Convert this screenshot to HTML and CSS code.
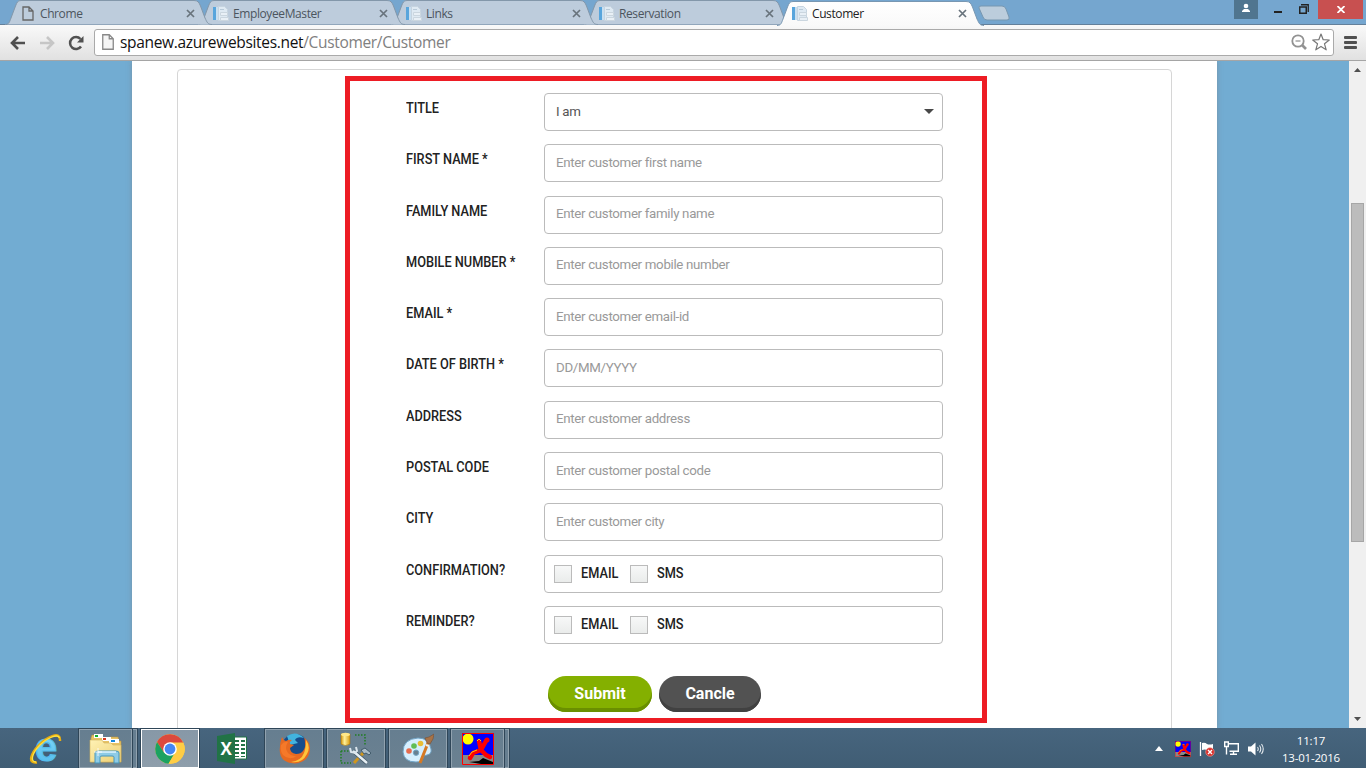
FILE: index.html
```html
<!DOCTYPE html>
<html lang="en">
<head>
<meta charset="utf-8">
<title>Customer</title>
<link rel="stylesheet" href="styles.css">
</head>
<body>
<svg class="defs" width="0" height="0" aria-hidden="true">
  <defs>
    <linearGradient id="active" x1="0" y1="0" x2="0" y2="1"><stop offset="0" stop-color="#fff"/><stop offset="1" stop-color="#f9f9f9"/></linearGradient>
    <linearGradient id="folder" x1="0" y1="0" x2="1" y2="1"><stop offset="0" stop-color="#fff2b5"/><stop offset="1" stop-color="#edcf72"/></linearGradient>
    <linearGradient id="gold" x1="0" x2="1"><stop offset="0" stop-color="#d59a14"/><stop offset=".4" stop-color="#fff09a"/><stop offset="1" stop-color="#d99a10"/></linearGradient>
    <linearGradient id="ieblue" x1="0" y1="0" x2="0" y2="1"><stop offset="0" stop-color="#8be0fb"/><stop offset="1" stop-color="#4fb9ec"/></linearGradient>
    <symbol id="tab-shape" viewBox="0 0 207 25"><path d="M0 24.500C4 24.500 4.500 22 6 18L10.500 6C12 2.500 12.500.500 16 .500H189C193 .500 194 2.500 195.500 6L200 18C202 22 202.500 24.500 207 24.500"/></symbol>
    <symbol id="favicon" viewBox="0 0 16 16"><path d="M0 1h3v13H0z" fill="#58a5dc"/><path d="M3 1h2v13H3z" fill="#c9dff0"/><path d="M5.500.500h6l3 3v11h-9z" fill="#dfeaf3" stroke="#c6d4e0"/><path d="M7.500 6.500h7v3h-7zM7.500 11.500h8v3h-8z" fill="#e9f0f6" stroke="#cbd6df"/><path d="M7 3.500h4" stroke="#b8cad9"/></symbol>
    <symbol id="close" viewBox="0 0 9 9"><path d="M1 1l7 7M8 1L1 8" fill="none" stroke="currentColor" stroke-width="1.700"/></symbol>
    <symbol id="page" viewBox="0 0 12 15"><path d="M1 1h6l4 4v9H1zM7 1v4h4" fill="none" stroke="currentColor" stroke-width="1.300"/></symbol>
    <symbol id="runner" viewBox="0 0 32 32"><path d="M0 0h32v32H0z" fill="#888"/><path d="M0 0h32v22H0z" fill="#00f"/><circle cx="6" cy="6" r="5.500" fill="#ff0"/><path d="M7 29l10-1 4-3 10 4v2H19z" fill="#000"/><path d="M24 8l-5 9-8 3-3 5M17 8l2 9 5 5 4 2" fill="none" stroke="#f00" stroke-width="4.500" stroke-linecap="round" stroke-linejoin="round"/><circle cx="25" cy="7" r="2.500" fill="#f00"/><path d="M15 8l2-2 2 2M7 23l3-4 5-2" fill="none" stroke="#ff0" stroke-width=".8"/><path d="M.5.5h31v31H.5z" fill="none" stroke="#f00"/></symbol>
  </defs>
</svg>
<div class="desktop">
  <header class="tabstrip">
    <div class="tabs">
      <div class="tab t1"><svg class="shape"><use href="#tab-shape"/></svg><svg class="ico file"><use href="#page"/></svg><span>Chrome</span><svg class="x"><use href="#close"/></svg></div>
      <div class="tab t2"><svg class="shape"><use href="#tab-shape"/></svg><svg class="ico"><use href="#favicon"/></svg><span>EmployeeMaster</span><svg class="x"><use href="#close"/></svg></div>
      <div class="tab t3"><svg class="shape"><use href="#tab-shape"/></svg><svg class="ico"><use href="#favicon"/></svg><span>Links</span><svg class="x"><use href="#close"/></svg></div>
      <div class="tab t4"><svg class="shape"><use href="#tab-shape"/></svg><svg class="ico"><use href="#favicon"/></svg><span>Reservation</span><svg class="x"><use href="#close"/></svg></div>
      <div class="tab on"><svg class="shape"><use href="#tab-shape"/></svg><svg class="ico"><use href="#favicon"/></svg><span>Customer</span><svg class="x"><use href="#close"/></svg></div>
      <svg class="newtab" width="32" height="16" viewBox="0 0 32 16"><path d="M3 1h21q3 0 4 3l3 8q1 3-2 3H9q-3 0-4-3L1 3q-.5-2 2-2z" fill="#bccddc" stroke="#7797b0"/></svg>
    </div>
    <div class="window-buttons">
      <div class="user"><svg width="24" height="19"><circle cx="12" cy="6" r="2.300" fill="#fff"/><path d="M8 12v-1l2-2h4l2 2v1z" fill="#fff"/></svg></div>
      <div class="min"></div>
      <svg class="restore" width="10" height="10"><path d="M2 .75h7.250V8" fill="none" stroke="#222" stroke-width="1.300"/><path d="M.75 3h6.500v6.250H.75z" fill="none" stroke="#222" stroke-width="1.500"/></svg>
      <div class="quit"><svg width="8" height="7"><path d="M.5 0l7 7M7.500 0l-7 7" stroke="#fff" stroke-width="1.800"/></svg></div>
    </div>
  </header>
  <nav class="toolbar">
    <svg class="arrow" width="16" height="14" viewBox="0 0 16 14"><path d="M15 7H3M8 1L2 7l6 6" fill="none" stroke="#505050" stroke-width="2.600"/></svg>
    <svg class="arrow fwd" width="16" height="14" viewBox="0 0 16 14"><path d="M1 7h12M8 1l6 6-6 6" fill="none" stroke="#c6c6c6" stroke-width="2.600"/></svg>
    <svg class="reload" width="16" height="16" viewBox="0 0 16 16"><path d="M13 11.500A6 6 0 1 1 12.500 4" fill="none" stroke="#505050" stroke-width="2.500"/><path d="M15.500 1v6.500H9z" fill="#505050"/></svg>
    <div class="address">
      <svg class="site" width="12" height="16" viewBox="0 0 12 16"><path d="M.75.750h6.500l4 4v10.500H.750zM7.250.750v4h4" fill="#f5f5f5" stroke="#888" stroke-width="1.300"/></svg>
      <p class="url">spanew.azurewebsites.net<span>/Customer/Customer</span></p>
      <svg class="lens" width="16" height="16" viewBox="0 0 16 16"><circle cx="7" cy="7" r="5.700" fill="none" stroke="#929292" stroke-width="1.800"/><path d="M4.500 7h5" stroke="#777"/><path d="M11 11l4 4" stroke="#929292" stroke-width="2.600"/></svg>
      <svg class="star" width="18" height="18" viewBox="0 0 18 18"><path d="M9 1l2.200 5.700 6.100.300-4.800 3.800 1.700 6L9 13.400l-5.200 3.400 1.700-6L.7 7l6.100-.300z" fill="#fff" stroke="#777" stroke-width="1.200" stroke-linejoin="round"/></svg>
    </div>
    <div class="menu"><i></i><i></i><i></i></div>
  </nav>
  <div class="viewport">
    <main class="site-body">
      <section class="panel">
        <form class="frame">
          <div class="row"><label>TITLE</label><div class="field select"><span>I am</span><svg width="10" height="5"><path d="M0 0h10L5 5z" fill="#484848"/></svg></div></div>
          <div class="row"><label>FIRST NAME *</label><div class="field hint">Enter customer first name</div></div>
          <div class="row"><label>FAMILY NAME</label><div class="field hint">Enter customer family name</div></div>
          <div class="row"><label>MOBILE NUMBER *</label><div class="field hint">Enter customer mobile number</div></div>
          <div class="row"><label>EMAIL *</label><div class="field hint">Enter customer email-id</div></div>
          <div class="row"><label>DATE OF BIRTH *</label><div class="field hint">DD/MM/YYYY</div></div>
          <div class="row"><label>ADDRESS</label><div class="field hint">Enter customer address</div></div>
          <div class="row"><label>POSTAL CODE</label><div class="field hint">Enter customer postal code</div></div>
          <div class="row"><label>CITY</label><div class="field hint">Enter customer city</div></div>
          <div class="row"><label>CONFIRMATION?</label><div class="field checks"><i></i><b class="mail">EMAIL</b><i></i><b>SMS</b></div></div>
          <div class="row"><label>REMINDER?</label><div class="field checks"><i></i><b class="mail">EMAIL</b><i></i><b>SMS</b></div></div>
          <div class="actions"><button type="button" class="submit">Submit</button><button type="button" class="cancel">Cancle</button></div>
        </form>
      </section>
    </main>
    <aside class="scrollbar">
      <svg width="7" height="4"><path d="M0 4h7L3.500 0z" fill="#505050"/></svg>
      <div class="thumb"></div>
      <svg width="7" height="4"><path d="M0 0h7L3.500 4z" fill="#505050"/></svg>
    </aside>
  </div>
  <footer class="taskbar">
    <div class="launch ie"><svg class="ie-logo" width="32" height="32" viewBox="0 0 32 32"><text class="ie-mark" x="5" y="27.500" fill="url(#ieblue)" stroke="#55bdec" stroke-width="1.200">e</text><path d="M7 29.500C-3 31 1 20 9 12S31-3 30 8" fill="none" stroke="#e7ad12" stroke-width="2.400"/><path d="M6 29C-1 29 3 19 10 12S28 0 29.500 5" fill="none" stroke="#ffe23f" stroke-width="1.300"/></svg></div>
    <div class="task explorer"><svg width="34" height="32" viewBox="0 0 34 32"><path d="M2 5l1-3h9l2 3h5l2-1h8l1 4h2v21H2z" fill="#e7c365" stroke="#b89443" stroke-width=".6"/><path d="M5 1h9v4H5zM13 4h9v4h-9zM20 6h10v4H20z" fill="#fff"/><path d="M6 2h3v2H6z" fill="#11af2c"/><path d="M14 5h3v2h-3z" fill="#d93820"/><path d="M22 7h4v2h-4z" fill="#1689dc"/><path d="M1 7h12l2 3h7l2 2h8v17H1z" fill="url(#folder)" stroke="#d2b15e" stroke-width=".6"/><path d="M6 30V20q0-2 3-2h18q3 0 3 2v10h-5v-6q0-1-2-1H13q-2 0-2 1v6z" fill="#8fcce6" stroke="#4696bb"/><path d="M9 19h18" stroke="#e0f6ff" stroke-width="1.500"/><path d="M9 15v8M5 19h8" stroke="#fff" stroke-width=".8"/></svg></div><div class="stack"></div>
    <div class="task current"><svg width="30" height="30" viewBox="0 0 30 30"><circle cx="15" cy="15" r="14.700" fill="#ffcd45"/><path d="M2 8A14.700 14.700 0 0 1 28.500 9H15l-6.500 9z" fill="#dc493d"/><path d="M2 8A14.700 14.700 0 0 0 13.500 29.700L20 18.500H9z" fill="#1ca261"/><path d="M15 8.500h13.200A14.700 14.700 0 0 1 13.500 29.700L20.500 18.500z" fill="#ffcd45"/><circle cx="15" cy="15" r="6.800" fill="#fff"/><circle cx="15" cy="15" r="5.400" fill="#4587f3"/></svg></div>
    <div class="launch excel"><svg width="30" height="31" viewBox="0 0 30 31"><path d="M15 4h14.500v22H15z" fill="#fff" stroke="#217346"/><path d="M18 7h4v2h-4zM24 7h4v2h-4zM18 11h4v2h-4zM24 11h4v2h-4zM18 15h4v2h-4zM24 15h4v2h-4zM18 19h4v2h-4zM24 19h4v2h-4zM18 23h4v1h-4zM24 23h4v1h-4z" fill="#217346"/><path d="M0 3l18-3v31L0 28z" fill="#217346"/><text class="xl-mark" x="3.500" y="21.500" fill="#fff">X</text></svg></div>
    <div class="task firefox"><svg width="31" height="31" viewBox="0 0 31 31"><circle cx="16" cy="14.500" r="13.500" fill="#174d8c"/><path d="M8 3Q17-3 25 5q-7-2-9 2l3 3-8 2z" fill="#42b3df"/><path d="M3 4q1 3 4 4 3-2 6-1-3 2-2 4l4 1-4 3q0 5 6 6 5 0 7-3 3-4 2-8 0-5-2-6 7 4 7 12-1 13-15 14.500Q1 30 .7 17 .5 10 3 4z" fill="#e66a21"/><path d="M27 7q5 7 1 14-5 10-16 8 10-1 13-9 2-5 2-13z" fill="#ffc53b"/><path d="M2 12q3-4 7-3-4 6 0 11 4 4 9 3-8 5-14-1-3-4-2-10z" fill="#f57929"/></svg></div>
    <div class="task tools"><svg width="32" height="33" viewBox="0 0 32 33"><path d="M1 2v10q4.500 3 9 0V2z" fill="url(#gold)" stroke="#a46c08" stroke-width=".5"/><ellipse cx="5.500" cy="2.500" rx="4.500" ry="1.700" fill="#ffe889"/><path d="M15 3h10v10M1 19v12h10M1 19h8" fill="none" stroke="#207d22" stroke-width="1.500" stroke-dasharray="1.500 1.500"/><path d="M14 31l10-11" stroke="#cf961e" stroke-width="3"/><path d="M21 18l4-2 6 5-2 2-3-2-2 1z" fill="#a9bbc7" stroke="#415b6b"/><path d="M13 19l14 12" stroke="#425766" stroke-width="4"/><path d="M13 19l14 12" stroke="#e6eff4" stroke-width="2.500"/><path d="M10 16l1 4 4 1 2-2-1-4" fill="none" stroke="#dce6ed" stroke-width="2"/></svg></div>
    <div class="task paint"><svg width="32" height="32" viewBox="0 0 32 32"><path d="M16 5Q1 6 1 19q1 10 13 10 6 0 7-4 0-3 4-3 5-1 4-6Q27 5 16 5zM14 17a2.700 2.700 0 1 0 .1 5.400A2.700 2.700 0 0 0 14 17z" fill="#d6efff" stroke="#71a4c5" fill-rule="evenodd"/><circle cx="7" cy="18" r="2.800" fill="#e66b4d"/><circle cx="12" cy="13" r="2.800" fill="#62bd55"/><circle cx="18.500" cy="10.500" r="2.800" fill="#e9bd36"/><path d="M18 30l8-20" stroke="#d67924" stroke-width="3"/><path d="M25 10l-2-5 4-1 5-3-1 5-3 5z" fill="#a87347" stroke="#765036" stroke-width=".6"/><path d="M24 12l3 1" stroke="#eee" stroke-width="2"/></svg></div>
    <div class="task run"><svg width="32" height="32"><use href="#runner"/></svg></div><div class="stack"></div>
    <div class="tray">
      <svg class="up" width="8" height="5"><path d="M0 5h8L4 0z" fill="#fff"/></svg>
      <svg class="mini" width="16" height="16"><use href="#runner"/></svg>
      <svg class="flag" width="16" height="16" viewBox="0 0 16 16"><path d="M1.500 1v14" stroke="#fff" stroke-width="1.300"/><path d="M3 2q3-1 5 1 2 1 6 0v7q-4 1-6-1-2-1-5 0z" fill="#fff"/><circle cx="11" cy="11" r="4.300" fill="#d92d29" stroke="#eba29c" stroke-width=".6"/><path d="M9 9l4 4M13 9l-4 4" stroke="#fff" stroke-width="1.400"/></svg>
      <svg class="net" width="16" height="15" viewBox="0 0 16 15"><path d="M5 2.700h9.300v7.600H5.500M9.500 10v3M6 13.300h7M.7 1h3.600v4.500H.7zM2.500 5.500v8" fill="none" stroke="#fff" stroke-width="1.400"/></svg>
      <svg class="sound" width="16" height="14" viewBox="0 0 16 14"><path d="M0 4.500h3L7.500.500v13L3 9.500H0z" fill="#fff"/><path d="M9.500 5q1.500 2 0 4M11.500 3.500q2.500 3.500 0 7M13.500 2q3.500 5 0 10" fill="none" stroke="#e3e9ed" stroke-width="1.100"/></svg>
      <div class="clock"><span class="time">11:17</span><span class="date">13-01-2016</span></div>
    </div>
  </footer>
</div>
</body>
</html>
```

FILE: styles.css
```css
* { box-sizing: border-box; }
body { margin: 0; overflow: hidden; font-family: Roboto, sans-serif; }
svg { display: block; flex: none; }
.defs { position: absolute; }
.desktop { display: flex; flex-direction: column; width: 1366px; height: 768px; overflow: hidden; }

/* Window chrome */
.tabstrip { display: flex; justify-content: space-between; height: 25px; background: #75a6cf; border-bottom: 1px solid #64809a; font-family: "Open Sans", sans-serif; }
.tabs { display: flex; padding: 0 0 0 5px; isolation: isolate; }
.tab { position: relative; display: flex; align-items: center; width: 207px; height: 26px; margin-right: -14px; padding: 1px 12px 0 17px; font-size: 12px; letter-spacing: -.4px; color: #4c555e; }
.tab span { flex: 1; margin-left: 4px; white-space: nowrap; }
.tab .shape { position: absolute; left: 0; top: 0; width: 207px; height: 25px; z-index: -1; fill: #bdccdc; stroke: #8397aa; }
.t1 { z-index: 4; }
.t2 { z-index: 3; }
.t3 { z-index: 2; }
.t4 { z-index: 1; }
.tab.on { z-index: 5; color: #222; }
.tab.on .shape { top: 1px; fill: url(#active); stroke: #7897b2; }
.ico { width: 16px; height: 16px; margin-left: -2px; }
.ico.file { width: 12px; height: 15px; margin-left: 0; color: #666; margin-right: 2px; }
.x { width: 9px; height: 9px; margin-right: 5px; color: #68737c; }
.newtab { margin: 5px 0 0 8px; }
.window-buttons { display: flex; height: 19px; padding-right: 3px; }
.user { width: 24px; background: #50758f; }
.min { width: 8px; height: 2px; margin: 11px 17px 0 16px; background: #222; }
.restore { margin-top: 4px; }
.quit { display: flex; align-items: center; justify-content: center; width: 45px; height: 19px; margin-left: 9px; background: #c85050; }
.toolbar { display: flex; align-items: center; height: 36px; padding: 0 8px 0 10px; background: linear-gradient(#f9f9f9, #e1e1e1); border-bottom: 1px solid #a5a5a5; }
.fwd { margin-left: 13px; }
.reload { margin: 0 10px 0 13px; }
.address { display: flex; align-items: center; width: 1240px; height: 27px; margin-top: -1px; padding: 0 3px 0 7px; border: 1px solid #aaa; border-radius: 3px; background: #fff; }
.url { flex: 1; margin: 0 0 0 6px; font: 15.500px/24px "Open Sans", sans-serif; letter-spacing: -.33px; color: #111; }
.url span { color: #808080; }
.lens { margin-right: 5px; }
.menu { display: flex; flex-direction: column; gap: 2px; margin-left: 10px; }
.menu i { width: 13px; height: 3px; border-radius: 1px; background: #505050; }

/* Page */
.viewport { display: flex; height: 667px; overflow: hidden; background: #72acd2; }
.site-body { flex: none; width: 1085px; margin: 0 132px; padding: 8px 45px 0; background: #fff; box-shadow: 0 0 5px rgba(120,130,140,.65); }
.panel { height: 700px; padding: 6px 0 0 167px; border: 1px solid #d6d6d6; border-radius: 4px; }
.frame { width: 642px; height: 647px; padding: 12px 39px 0 56px; border: 5px solid #ed1c24; }
.row { display: flex; justify-content: space-between; height: 51.300px; }
.row label { width: 138px; padding-top: 7px; font-size: 14px; line-height: 16px; font-weight: 500; color: #222; white-space: nowrap; transform: scaleX(.91); transform-origin: left; }
.field { display: flex; align-items: center; width: 399px; height: 38px; padding: 0 9px 2px 11px; border: 1px solid #bbb; border-radius: 4px; background: #fff; font-size: 13.300px; letter-spacing: -.32px; color: #555; }
.hint { color: #999; }
.select { justify-content: space-between; padding-right: 8px; }
.checks { padding: 0 9px; }
.checks i { width: 18px; height: 18px; border: 1px solid #bbb; background: linear-gradient(#f7f8f8, #eaeceb); }
.checks b { margin-left: 9px; padding-bottom: 1px; font-weight: 500; font-size: 14px; letter-spacing: 0; color: #222; transform: scaleX(.91); transform-origin: left; }
.checks .mail { width: 49px; }
.actions { display: flex; gap: 7px; margin: 19px 0 0 142px; }
.actions button { width: 104px; height: 36px; padding: 0 0 2px; border: 0; border-radius: 18px; font: 700 16px Roboto, sans-serif; color: #fff; }
.submit { background: #84b000; box-shadow: inset 0 -4px #6a8f00; }
.actions .cancel { width: 102px; background: #525252; box-shadow: inset 0 -4px #414141; }
.scrollbar { display: flex; flex-direction: column; align-items: center; width: 17px; padding: 7px 0 7px; background: #f0f0f0; flex: none; }
.thumb { width: 13px; height: 339px; margin: 131px 0 auto; border: 1px solid #a6a6a6; background: #bcbcbc; flex: none; }

/* Taskbar */
.taskbar { display: flex; height: 40px; padding: 1px 0 0 31px; background: linear-gradient(#47657e, #405d74); }
.task, .launch { display: flex; align-items: center; justify-content: center; height: 39px; flex: none; }
.task { width: 58px; border: 1px solid #91a2af; outline: 1px solid #2f4658; background: linear-gradient(#667e90, #6b8191); margin-right: 4px; }
.ie { width: 30px; margin-right: 18px; }
.ie-logo { overflow: visible; }
.ie-mark { font: bold 40px "Liberation Sans", sans-serif; }
.xl-mark { font: bold 17px "Open Sans", sans-serif; }
.explorer, .run { width: 53px; margin-right: 1px; }
.stack { width: 4px; height: 39px; border: 1px solid #91a2af; border-left: 0; outline: 1px solid #2f4658; background: #667e90; margin-right: 4px; }
.task.current { background: linear-gradient(#8798a7, #8e9eab); border-color: #fff; margin-right: 18px; }
.excel { width: 30px; margin-right: 18px; }
.tray { display: flex; align-items: center; margin-left: auto; padding-right: 25px; color: #fff; font-family: "Open Sans", sans-serif; }
.mini { margin-left: 12px; }
.flag { margin-left: 8px; }
.net { margin-left: 9px; }
.sound { margin-left: 8px; }
.clock { display: flex; flex-direction: column; align-items: center; width: 60px; margin-left: 17px; font-size: 11.500px; line-height: 17px; white-space: nowrap; letter-spacing: -.2px; }
```
